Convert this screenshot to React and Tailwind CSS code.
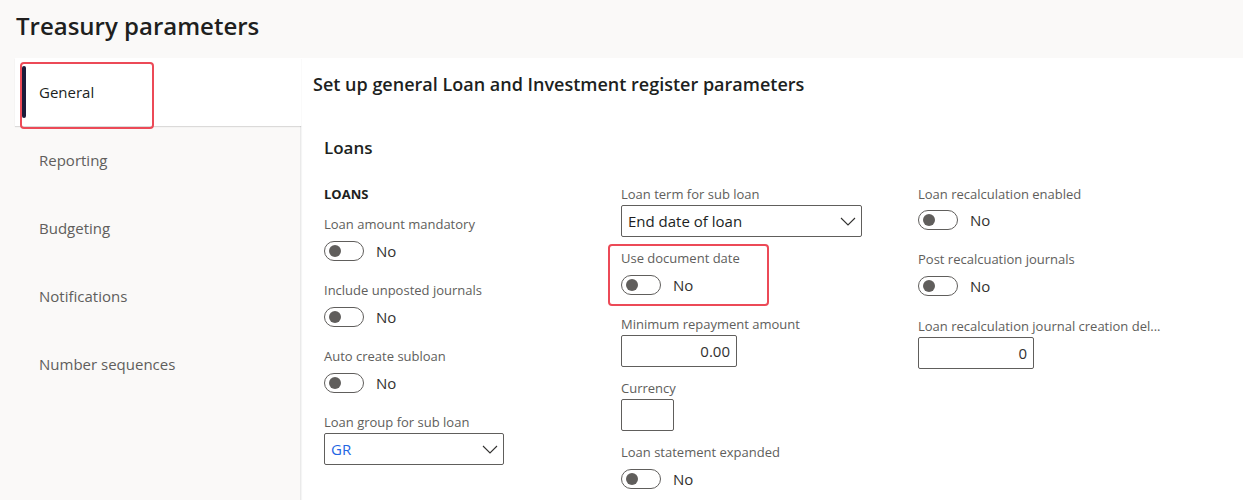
const navItems = ['Reporting', 'Budgeting', 'Notifications', 'Number sequences'];

function Label({ children }) {
  return <div className="text-[13px] leading-[18px] text-[#605e5c] whitespace-nowrap">{children}</div>;
}

function Toggle() {
  return (
    <div className="mt-[2px] h-[32px] flex items-center gap-3">
      <div className="w-[40px] h-[20px] rounded-full border border-[#605e5c] flex items-center">
        <div className="w-[12px] h-[12px] rounded-full bg-[#605e5c] ml-[4px]" />
      </div>
      <span className="text-[15px] text-[#323130]">No</span>
    </div>
  );
}

function Chevron() {
  return (
    <svg width="16" height="9" viewBox="0 0 16 9" fill="none" className="shrink-0">
      <path d="M1 1l7 7 7-7" stroke="#323130" strokeWidth="1.1" />
    </svg>
  );
}

function Select({ value, width, blue }) {
  return (
    <div className={`mt-[2px] h-[32px] ${width} border border-[#605e5c] rounded-[2px] flex items-center justify-between pl-[6px] pr-[5px]`}>
      <span className={`text-[15px] ${blue ? 'text-[#2266e3]' : 'text-[#201f1e]'}`}>{value}</span>
      <Chevron />
    </div>
  );
}

function Input({ value, width }) {
  return (
    <div className={`mt-[2px] h-[32px] ${width} border border-[#605e5c] rounded-[2px] flex items-center justify-end pr-[6px]`}>
      <span className="text-[15px] text-[#323130]">{value}</span>
    </div>
  );
}

export default function App() {
  return (
    <div className="w-[1243px] h-[500px] overflow-hidden bg-white font-['Segoe_UI','Open_Sans',sans-serif] relative">
      {/* Header */}
      <div className="h-[58px] bg-[#faf9f8] pl-4 pt-[10px]">
        <h1 className="text-[24px] leading-[32px] font-semibold text-[#201f1e]">Treasury parameters</h1>
      </div>

      <div className="flex h-[442px]">
        {/* Nav */}
        <div className="w-[15px] bg-[#faf9f8]" />
        <div className="w-[286px] flex flex-col">
          <div className="h-[68px] bg-white flex items-center pl-[24px] relative shadow-[0_1px_1px_rgba(0,0,0,0.12)] z-10">
            <div className="absolute left-[7px] top-[8px] bottom-[8px] w-[4px] rounded-full bg-[#1b1b3a]" />
            <span className="text-[15px] text-[#201f1e]">General</span>
          </div>
          <div className="flex-1 bg-[#faf9f8] border-r border-[#eaeaea] shadow-[1px_0_1px_rgba(0,0,0,0.04)]">
            {navItems.map((item) => (
              <div key={item} className="h-[68px] flex items-center pl-[24px] text-[15px] text-[#605e5c]">
                {item}
              </div>
            ))}
          </div>
        </div>

        {/* Content */}
        <div className="flex-1 flex flex-col">
          <div className="h-[68px] pl-[12px] pt-[13px]">
            <h2 className="text-[18px] leading-[26px] font-semibold text-[#201f1e]">Set up general Loan and Investment register parameters</h2>
          </div>
          <div className="pl-[23px]">
            <div className="pt-[10px] h-[59px]">
              <h3 className="text-[17px] leading-[24px] font-semibold text-[#201f1e]">Loans</h3>
            </div>

            <div className="grid grid-cols-[297px_297px_297px]">
              {/* Column 1 */}
              <div>
                <div className="text-[13px] leading-[18px] font-bold text-[#201f1e] mb-[12px]">LOANS</div>
                <div className="mb-[14px]"><Label>Loan amount mandatory</Label><Toggle /></div>
                <div className="mb-[14px]"><Label>Include unposted journals</Label><Toggle /></div>
                <div className="mb-[14px]"><Label>Auto create subloan</Label><Toggle /></div>
                <div><Label>Loan group for sub loan</Label><Select value="GR" width="w-[180px]" blue /></div>
              </div>

              {/* Column 2 */}
              <div>
                <div className="mb-[12px]"><Label>Loan term for sub loan</Label><Select value="End date of loan" width="w-[241px]" /></div>
                <div className="mb-[14px]"><Label>Use document date</Label><Toggle /></div>
                <div className="mb-[12px]"><Label>Minimum repayment amount</Label><Input value="0.00" width="w-[116px]" /></div>
                <div className="mb-[12px]"><Label>Currency</Label><Input value="" width="w-[53px]" /></div>
                <div><Label>Loan statement expanded</Label><Toggle /></div>
              </div>

              {/* Column 3 */}
              <div>
                <div className="mb-[14px]"><Label>Loan recalculation enabled</Label><div className="-mt-[1px]"><Toggle /></div></div>
                <div className="mb-[15px]"><Label>Post recalcuation journals</Label><Toggle /></div>
                <div><Label>Loan recalculation journal creation del...</Label><Input value="0" width="w-[116px]" /></div>
              </div>
            </div>
          </div>
        </div>
      </div>

      {/* Annotation highlights */}
      <div className="absolute z-20 left-[20px] top-[62px] w-[134px] h-[67px] border-2 border-[#ec4a57] rounded-[4px] pointer-events-none" />
      <div className="absolute z-20 left-[608px] top-[244px] w-[161px] h-[62px] border-2 border-[#ec4a57] rounded-[4px] pointer-events-none" />
    </div>
  );
}
